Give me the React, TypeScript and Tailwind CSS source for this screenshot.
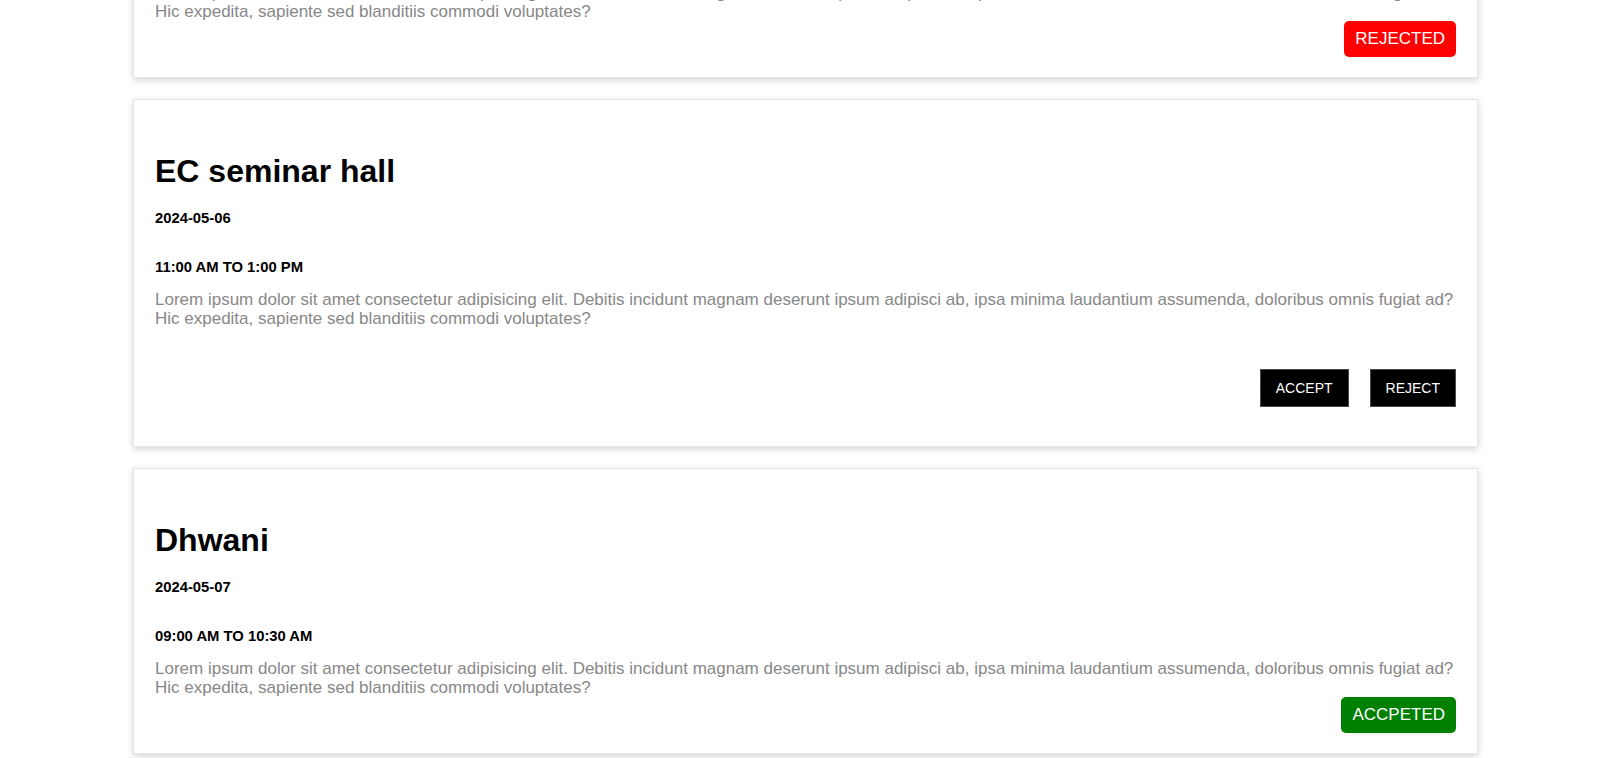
import React from 'react';

type Status = 'pending' | 'accepted' | 'rejected';

interface Booking {
  id: number;
  hall: string;
  date: string;
  time: string;
  status: Status;
}

const bookings: Booking[] = [
  { id: 1, hall: 'Main auditorium', date: '2024-05-05', time: '02:00 PM TO 04:00 PM', status: 'rejected' },
  { id: 2, hall: 'EC seminar hall', date: '2024-05-06', time: '11:00 AM TO 1:00 PM', status: 'pending' },
  { id: 3, hall: 'Dhwani', date: '2024-05-07', time: '09:00 AM TO 10:30 AM', status: 'accepted' },
];

const description =
  'Lorem ipsum dolor sit amet consectetur adipisicing elit. Debitis incidunt magnam deserunt ipsum adipisci ab, ipsa minima laudantium assumenda, doloribus omnis fugiat ad? Hic expedita, sapiente sed blanditiis commodi voluptates?';

function BookingCard({ booking }: { booking: Booking }) {
  return (
    <div className="bg-white border border-[#e6e6e6] shadow-[0_2px_7px_rgba(0,0,0,0.18)] px-[21px] pt-[53px] flex flex-col">
      <h1 className="text-[32px] leading-[37px] font-bold text-black">{booking.hall}</h1>
      <h4 className="mt-5 text-[14.8px] leading-[17px] font-bold text-black">{booking.date}</h4>
      <h4 className="mt-8 text-[14.8px] leading-[17px] font-bold text-black">{booking.time}</h4>
      <p className="mt-[14px] text-[17px] leading-[19px] text-[#888888]">{description}</p>

      {booking.status === 'pending' ? (
        <div className="mt-[41px] mb-[39px] flex justify-end gap-[21px]">
          <button className="h-[38px] px-[15px] bg-black border border-[#4a4a4a] text-white text-[14px]">
            ACCEPT
          </button>
          <button className="h-[38px] px-[15px] bg-black border border-[#4a4a4a] text-white text-[14px]">
            REJECT
          </button>
        </div>
      ) : (
        <div className="mb-5 flex justify-end">
          <span
            className={`h-[36px] px-[11px] flex items-center rounded-[5px] text-white text-[17px] ${
              booking.status === 'accepted' ? 'bg-[#008000]' : 'bg-[#ff0000]'
            }`}
          >
            {booking.status === 'accepted' ? 'ACCPETED' : 'REJECTED'}
          </span>
        </div>
      )}
    </div>
  );
}

export default function App() {
  return (
    <div className="min-h-screen bg-white overflow-hidden font-['Liberation_Sans',Arial,sans-serif]">
      {/* list is scrolled: first card sits partly above the viewport */}
      <div className="-mt-[208px] pl-[133px] pr-[122px] flex flex-col gap-[21px] pb-10">
        {bookings.map((b) => (
          <BookingCard key={b.id} booking={b} />
        ))}
      </div>
    </div>
  );
}
